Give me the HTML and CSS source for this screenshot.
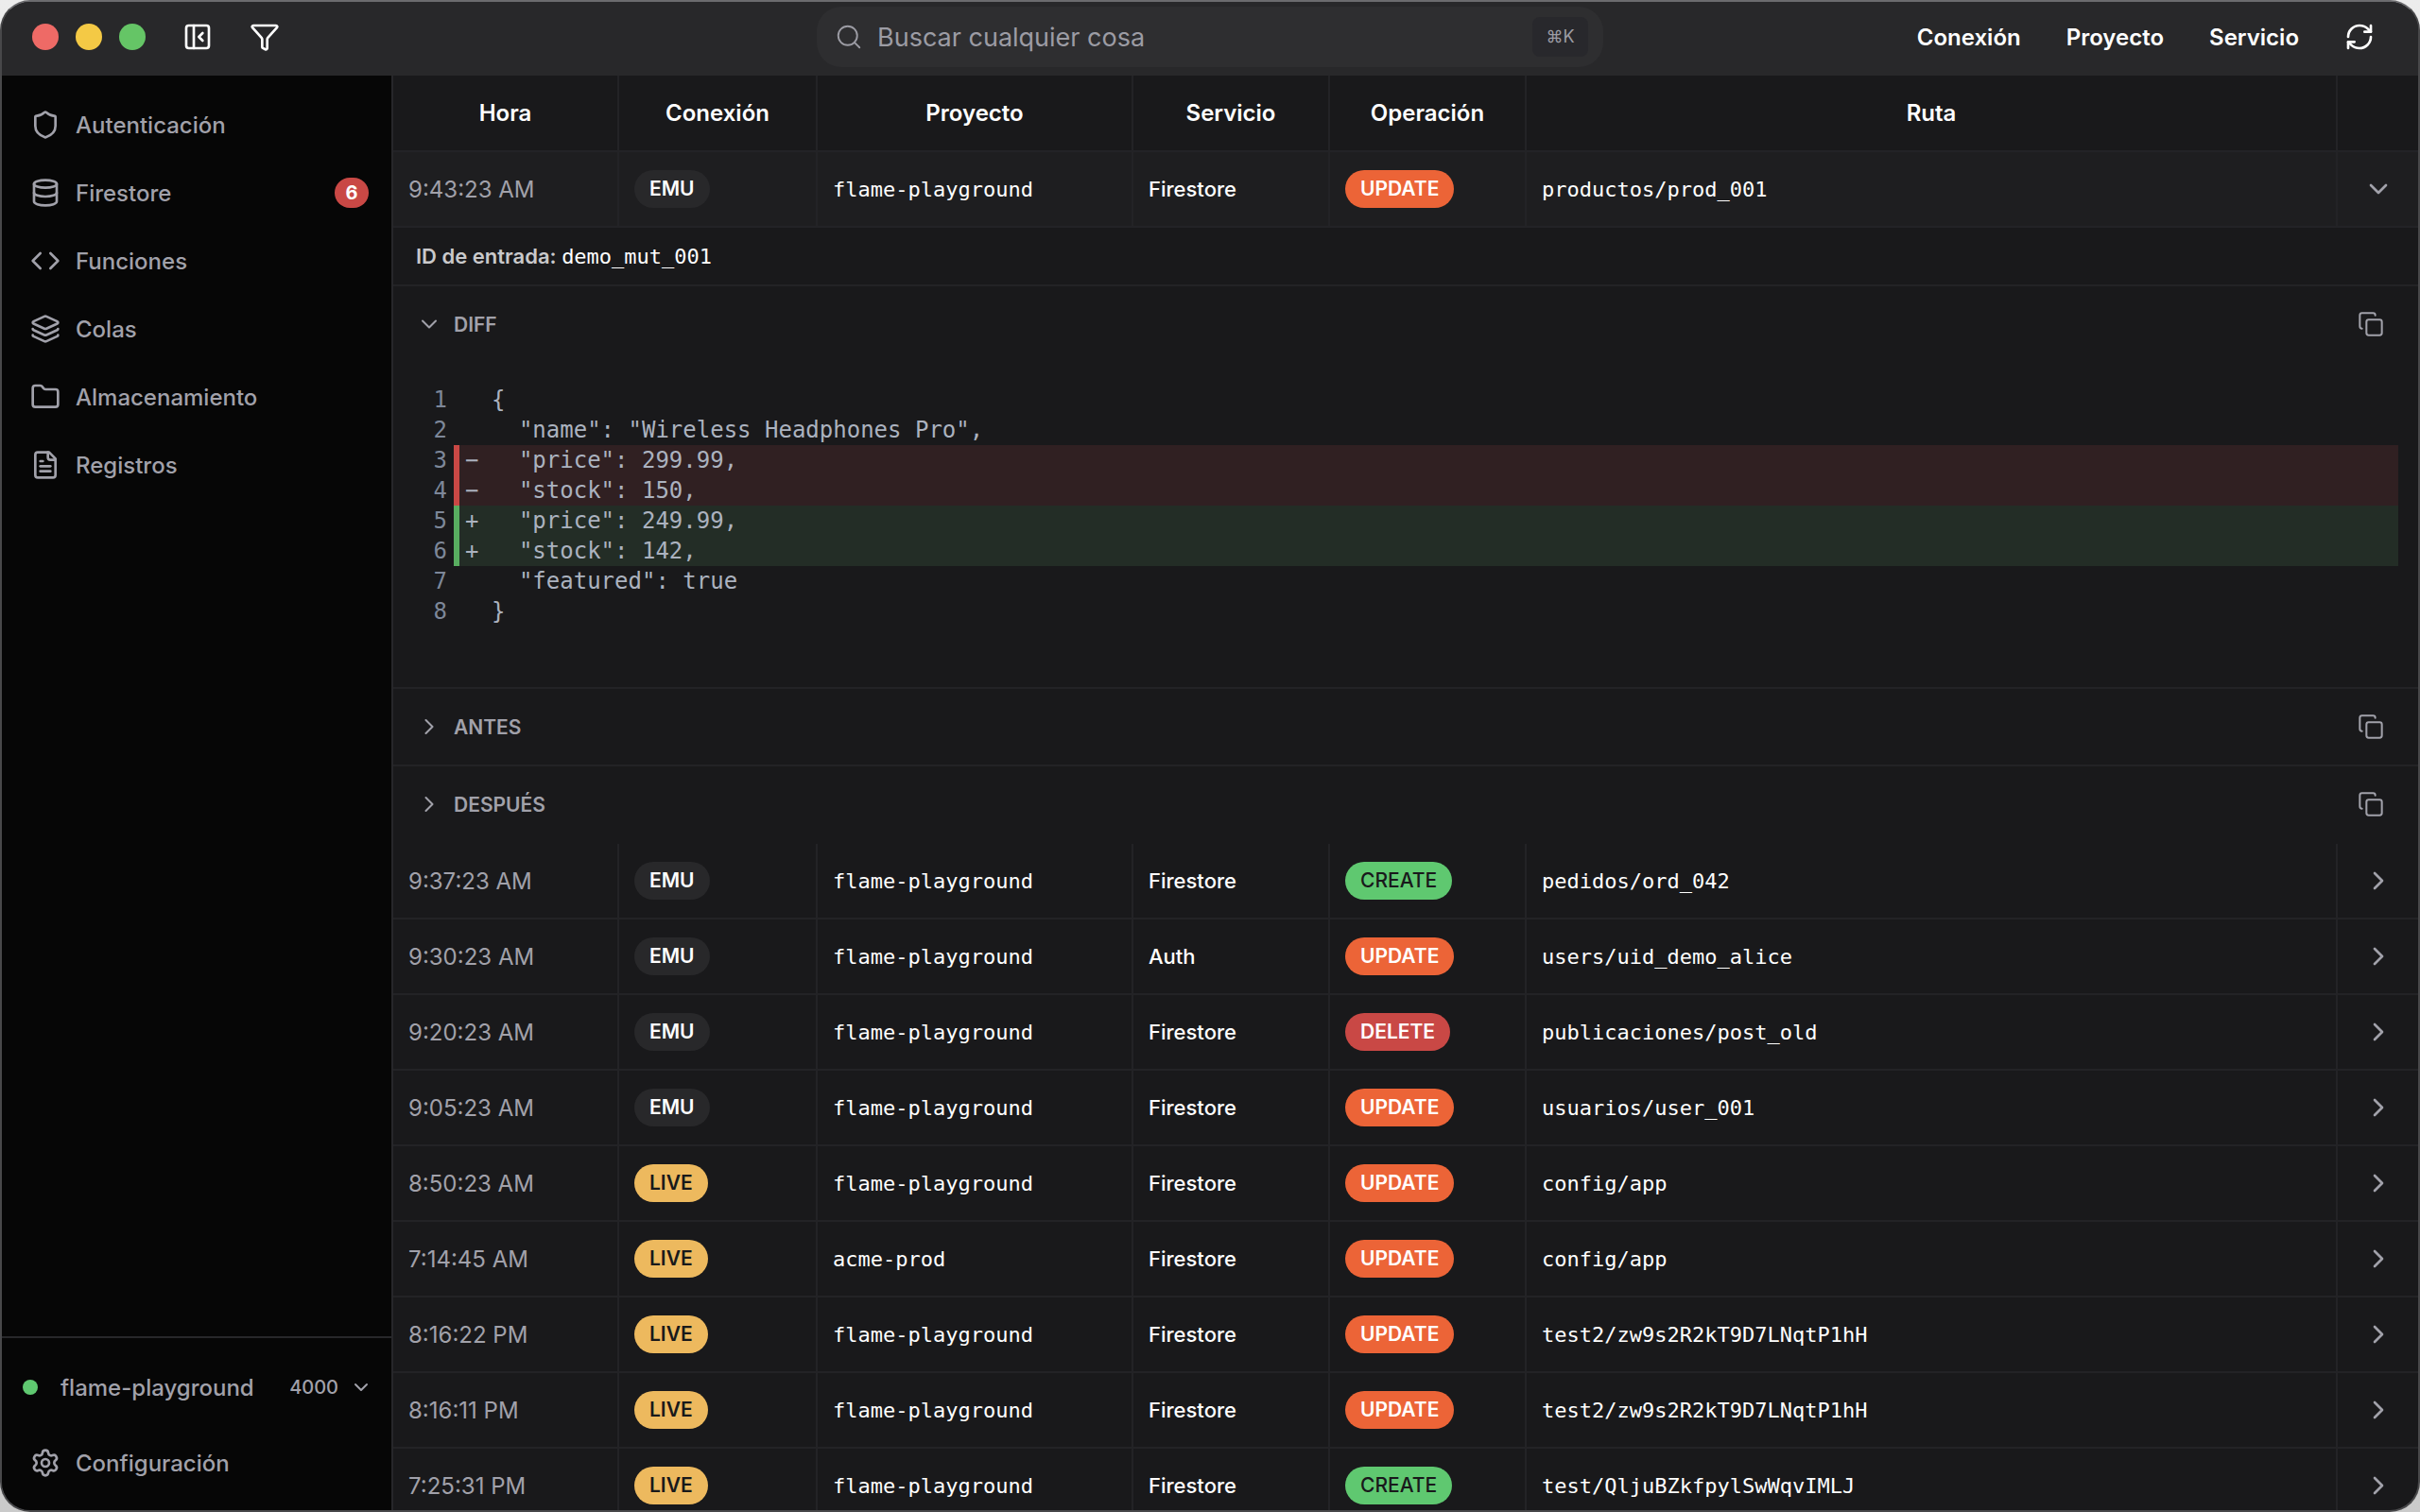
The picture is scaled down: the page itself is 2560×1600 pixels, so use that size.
FILE: index.html
```html
<!DOCTYPE html>
<html lang="es">
<head>
  <meta charset="utf-8">
  <meta name="viewport" content="width=device-width, initial-scale=1.0">
  <title>flame-playground</title>
  <link rel="stylesheet" href="styles.css">
</head>
<body>
  <svg class="sprite" aria-hidden="true">
    <symbol id="i-panel" viewBox="0 0 24 24"><rect x="3" y="3" width="18" height="18" rx="2"/><path d="M9 3v18"/><path d="m16 15-3-3 3-3"/></symbol>
    <symbol id="i-funnel" viewBox="0 0 24 24"><path d="M10 20a1 1 0 0 0 .553.895l2 1A1 1 0 0 0 14 21v-7a2 2 0 0 1 .517-1.341L21.74 4.67A1 1 0 0 0 21 3H3a1 1 0 0 0-.742 1.67l7.225 7.989A2 2 0 0 1 10 14z"/></symbol>
    <symbol id="i-search" viewBox="0 0 24 24"><circle cx="11" cy="11" r="8"/><path d="m21 21-4.34-4.34"/></symbol>
    <symbol id="i-refresh" viewBox="0 0 24 24"><path d="M3 12a9 9 0 0 1 9-9 9.75 9.75 0 0 1 6.74 2.74L21 8"/><path d="M21 3v5h-5"/><path d="M21 12a9 9 0 0 1-9 9 9.75 9.75 0 0 1-6.74-2.74L3 16"/><path d="M8 16H3v5"/></symbol>
    <symbol id="i-shield" viewBox="0 0 24 24"><path d="M20 13c0 5-3.500 7.500-7.660 8.950a1 1 0 0 1-.67-.01C7.500 20.500 4 18 4 13V6a1 1 0 0 1 1-1c2 0 4.500-1.200 6.240-2.720a1.170 1.170 0 0 1 1.520 0C14.510 3.810 17 5 19 5a1 1 0 0 1 1 1z"/></symbol>
    <symbol id="i-database" viewBox="0 0 24 24"><ellipse cx="12" cy="5" rx="9" ry="3"/><path d="M3 5v14a9 3 0 0 0 18 0V5"/><path d="M3 12a9 3 0 0 0 18 0"/></symbol>
    <symbol id="i-code" viewBox="0 0 24 24"><path d="m16 18 6-6-6-6"/><path d="m8 6-6 6 6 6"/></symbol>
    <symbol id="i-layers" viewBox="0 0 24 24"><path d="M12.830 2.180a2 2 0 0 0-1.660 0L2.600 6.080a1 1 0 0 0 0 1.830l8.580 3.910a2 2 0 0 0 1.660 0l8.580-3.900a1 1 0 0 0 0-1.830z"/><path d="M2 12a1 1 0 0 0 .58.91l8.600 3.910a2 2 0 0 0 1.650 0l8.580-3.900A1 1 0 0 0 22 12"/><path d="M2 17a1 1 0 0 0 .58.91l8.600 3.910a2 2 0 0 0 1.650 0l8.580-3.900A1 1 0 0 0 22 17"/></symbol>
    <symbol id="i-folder" viewBox="0 0 24 24"><path d="M20 20a2 2 0 0 0 2-2V8a2 2 0 0 0-2-2h-7.900a2 2 0 0 1-1.690-.9L9.600 3.900A2 2 0 0 0 7.930 3H4a2 2 0 0 0-2 2v13a2 2 0 0 0 2 2Z"/></symbol>
    <symbol id="i-file" viewBox="0 0 24 24"><path d="M15 2H6a2 2 0 0 0-2 2v16a2 2 0 0 0 2 2h12a2 2 0 0 0 2-2V7Z"/><path d="M14 2v4a2 2 0 0 0 2 2h4"/><path d="M10 9H8"/><path d="M16 13H8"/><path d="M16 17H8"/></symbol>
    <symbol id="i-gear" viewBox="0 0 24 24"><path d="M9.671 4.136a2.340 2.340 0 0 1 4.659 0 2.340 2.340 0 0 0 3.319 1.915 2.340 2.340 0 0 1 2.330 4.033 2.340 2.340 0 0 0 0 3.831 2.340 2.340 0 0 1-2.330 4.033 2.340 2.340 0 0 0-3.319 1.915 2.340 2.340 0 0 1-4.659 0 2.340 2.340 0 0 0-3.320-1.915 2.340 2.340 0 0 1-2.330-4.033 2.340 2.340 0 0 0 0-3.831A2.340 2.340 0 0 1 6.350 6.051a2.340 2.340 0 0 0 3.319-1.915"/><circle cx="12" cy="12" r="3"/></symbol>
    <symbol id="i-down" viewBox="0 0 24 24"><path d="m6 9 6 6 6-6"/></symbol>
    <symbol id="i-right" viewBox="0 0 24 24"><path d="m9 18 6-6-6-6"/></symbol>
    <symbol id="i-copy" viewBox="0 0 24 24"><rect x="8" y="8" width="14" height="14" rx="2"/><path d="M4 16c-1.100 0-2-.9-2-2V4c0-1.100.9-2 2-2h10c1.100 0 2 .9 2 2"/></symbol>
  </svg>

  <div class="window">
    <header class="titlebar">
      <div class="titlebar-left">
        <div class="lights"><span class="light red"></span><span class="light yellow"></span><span class="light green"></span></div>
        <button class="icon-btn" aria-label="Ocultar barra lateral"><svg class="icon"><use href="#i-panel"/></svg></button>
        <button class="icon-btn" aria-label="Filtrar"><svg class="icon"><use href="#i-funnel"/></svg></button>
      </div>
      <label class="search">
        <svg class="icon thin"><use href="#i-search"/></svg>
        <input type="text" placeholder="Buscar cualquier cosa" aria-label="Buscar cualquier cosa">
        <kbd>⌘K</kbd>
      </label>
      <div class="titlebar-right">
        <button class="menu-btn">Conexión</button>
        <button class="menu-btn">Proyecto</button>
        <button class="menu-btn">Servicio</button>
        <button class="icon-btn" aria-label="Actualizar"><svg class="icon"><use href="#i-refresh"/></svg></button>
      </div>
    </header>

    <div class="body">
      <aside class="sidebar">
        <nav>
          <a href="#"><svg class="icon"><use href="#i-shield"/></svg>Autenticación</a>
          <a href="#"><svg class="icon"><use href="#i-database"/></svg>Firestore<span class="count">6</span></a>
          <a href="#"><svg class="icon"><use href="#i-code"/></svg>Funciones</a>
          <a href="#"><svg class="icon"><use href="#i-layers"/></svg>Colas</a>
          <a href="#"><svg class="icon"><use href="#i-folder"/></svg>Almacenamiento</a>
          <a href="#"><svg class="icon"><use href="#i-file"/></svg>Registros</a>
        </nav>
        <div class="sidebar-footer">
          <button class="project-btn">
            <span class="dot"></span>
            <span class="project-name">flame-playground</span>
            <span class="port">4000</span>
            <svg class="icon small"><use href="#i-down"/></svg>
          </button>
          <a href="#"><svg class="icon"><use href="#i-gear"/></svg>Configuración</a>
        </div>
      </aside>

      <main>
        <table>
          <colgroup>
            <col class="c-time"><col class="c-conn"><col class="c-proj"><col class="c-serv"><col class="c-op"><col><col class="c-toggle">
          </colgroup>
          <thead>
            <tr>
              <th>Hora</th>
              <th>Conexión</th>
              <th>Proyecto</th>
              <th>Servicio</th>
              <th>Operación</th>
              <th>Ruta</th>
              <th></th>
            </tr>
          </thead>
          <tbody>
            <tr class="open">
              <td class="time">9:43:23 AM</td>
              <td><span class="badge emu">EMU</span></td>
              <td class="mono">flame-playground</td>
              <td>Firestore</td>
              <td><span class="badge update">UPDATE</span></td>
              <td class="mono">productos/prod_001</td>
              <td class="toggle"><button aria-label="Contraer"><svg class="icon"><use href="#i-down"/></svg></button></td>
            </tr>
            <tr class="detail">
              <td colspan="7">
                <div class="entry-id">ID de entrada: <code>demo_mut_001</code></div>
                <section>
                  <div class="section-head">
                    <button class="section-btn"><svg class="icon medium"><use href="#i-down"/></svg>DIFF</button>
                    <button class="copy-btn" aria-label="Copiar"><svg class="icon medium"><use href="#i-copy"/></svg></button>
                  </div>
                  <div class="diff">
                    <div class="line"><span class="num">1</span><span class="code">{</span></div>
                    <div class="line"><span class="num">2</span><span class="code">  "name": "Wireless Headphones Pro",</span></div>
                    <div class="line removed"><span class="num">3</span><span class="code"><span class="mark">−</span>  "price": 299.99,</span></div>
                    <div class="line removed"><span class="num">4</span><span class="code"><span class="mark">−</span>  "stock": 150,</span></div>
                    <div class="line added"><span class="num">5</span><span class="code"><span class="mark">+</span>  "price": 249.99,</span></div>
                    <div class="line added"><span class="num">6</span><span class="code"><span class="mark">+</span>  "stock": 142,</span></div>
                    <div class="line"><span class="num">7</span><span class="code">  "featured": true</span></div>
                    <div class="line"><span class="num">8</span><span class="code">}</span></div>
                  </div>
                </section>
                <section>
                  <div class="section-head">
                    <button class="section-btn"><svg class="icon medium"><use href="#i-right"/></svg>ANTES</button>
                    <button class="copy-btn" aria-label="Copiar"><svg class="icon medium"><use href="#i-copy"/></svg></button>
                  </div>
                </section>
                <section>
                  <div class="section-head">
                    <button class="section-btn"><svg class="icon medium"><use href="#i-right"/></svg>DESPUÉS</button>
                    <button class="copy-btn" aria-label="Copiar"><svg class="icon medium"><use href="#i-copy"/></svg></button>
                  </div>
                </section>
              </td>
            </tr>
            <tr>
              <td class="time">9:37:23 AM</td>
              <td><span class="badge emu">EMU</span></td>
              <td class="mono">flame-playground</td>
              <td>Firestore</td>
              <td><span class="badge create">CREATE</span></td>
              <td class="mono">pedidos/ord_042</td>
              <td class="toggle"><button aria-label="Expandir"><svg class="icon"><use href="#i-right"/></svg></button></td>
            </tr>
            <tr>
              <td class="time">9:30:23 AM</td>
              <td><span class="badge emu">EMU</span></td>
              <td class="mono">flame-playground</td>
              <td>Auth</td>
              <td><span class="badge update">UPDATE</span></td>
              <td class="mono">users/uid_demo_alice</td>
              <td class="toggle"><button aria-label="Expandir"><svg class="icon"><use href="#i-right"/></svg></button></td>
            </tr>
            <tr>
              <td class="time">9:20:23 AM</td>
              <td><span class="badge emu">EMU</span></td>
              <td class="mono">flame-playground</td>
              <td>Firestore</td>
              <td><span class="badge delete">DELETE</span></td>
              <td class="mono">publicaciones/post_old</td>
              <td class="toggle"><button aria-label="Expandir"><svg class="icon"><use href="#i-right"/></svg></button></td>
            </tr>
            <tr>
              <td class="time">9:05:23 AM</td>
              <td><span class="badge emu">EMU</span></td>
              <td class="mono">flame-playground</td>
              <td>Firestore</td>
              <td><span class="badge update">UPDATE</span></td>
              <td class="mono">usuarios/user_001</td>
              <td class="toggle"><button aria-label="Expandir"><svg class="icon"><use href="#i-right"/></svg></button></td>
            </tr>
            <tr>
              <td class="time">8:50:23 AM</td>
              <td><span class="badge live">LIVE</span></td>
              <td class="mono">flame-playground</td>
              <td>Firestore</td>
              <td><span class="badge update">UPDATE</span></td>
              <td class="mono">config/app</td>
              <td class="toggle"><button aria-label="Expandir"><svg class="icon"><use href="#i-right"/></svg></button></td>
            </tr>
            <tr>
              <td class="time">7:14:45 AM</td>
              <td><span class="badge live">LIVE</span></td>
              <td class="mono">acme-prod</td>
              <td>Firestore</td>
              <td><span class="badge update">UPDATE</span></td>
              <td class="mono">config/app</td>
              <td class="toggle"><button aria-label="Expandir"><svg class="icon"><use href="#i-right"/></svg></button></td>
            </tr>
            <tr>
              <td class="time">8:16:22 PM</td>
              <td><span class="badge live">LIVE</span></td>
              <td class="mono">flame-playground</td>
              <td>Firestore</td>
              <td><span class="badge update">UPDATE</span></td>
              <td class="mono">test2/zw9s2R2kT9D7LNqtP1hH</td>
              <td class="toggle"><button aria-label="Expandir"><svg class="icon"><use href="#i-right"/></svg></button></td>
            </tr>
            <tr>
              <td class="time">8:16:11 PM</td>
              <td><span class="badge live">LIVE</span></td>
              <td class="mono">flame-playground</td>
              <td>Firestore</td>
              <td><span class="badge update">UPDATE</span></td>
              <td class="mono">test2/zw9s2R2kT9D7LNqtP1hH</td>
              <td class="toggle"><button aria-label="Expandir"><svg class="icon"><use href="#i-right"/></svg></button></td>
            </tr>
            <tr>
              <td class="time">7:25:31 PM</td>
              <td><span class="badge live">LIVE</span></td>
              <td class="mono">flame-playground</td>
              <td>Firestore</td>
              <td><span class="badge create">CREATE</span></td>
              <td class="mono">test/QljuBZkfpylSwWqvIMLJ</td>
              <td class="toggle"><button aria-label="Expandir"><svg class="icon"><use href="#i-right"/></svg></button></td>
            </tr>
          </tbody>
        </table>
      </main>
    </div>
  </div>
</body>
</html>
```
FILE: styles.css
```css
* {
    box-sizing: border-box;
}
body {
    margin: 0;
    background: linear-gradient(#ececec, #cacaca);
    color: #fff;
    font-family: Inter, "Liberation Sans", sans-serif;
    font-size: 24px;
}
button, input {
    padding: 0;
    border: 0;
    background: none;
    color: inherit;
    font: inherit;
}
a {
    color: inherit;
    text-decoration: none;
}
.sprite {
    display: none;
}
.icon {
    display: block;
    flex: none;
    width: 32px;
    height: 32px;
    fill: none;
    stroke: currentColor;
    stroke-width: 2;
    stroke-linecap: round;
    stroke-linejoin: round;
}
.icon.medium {
    width: 28px;
    height: 28px;
    stroke-width: 1.75;
}
.icon.small {
    width: 24px;
    height: 24px;
}
.icon.thin {
    width: 30px;
    height: 30px;
    stroke-width: 1.5;
}

.window {
    display: flex;
    flex-direction: column;
    height: 100vh;
    overflow: hidden;
    border: 2px solid #48484a;
    border-top-color: #6b6b6e;
    border-radius: 32px;
    background-color: #19191b;
}

/* Title bar */
.titlebar {
    display: grid;
    grid-template-columns: 1fr minmax(0, 832px) 1fr;
    align-items: center;
    flex: none;
    height: 78px;
    padding-bottom: 4px;
    background-color: #28282a;
}
.titlebar-left {
    display: flex;
    align-items: center;
    gap: 39px;
    padding-left: 32px;
}
.lights {
    display: flex;
    gap: 18px;
}
.light {
    width: 28px;
    height: 28px;
    border-radius: 50%;
}
.red { background-color: #ee6a66; }
.yellow { background-color: #f4c945; }
.green { background-color: #65c566; }
.search {
    display: flex;
    align-items: center;
    height: 64px;
    padding: 0 16px 0 19px;
    border-radius: 26px;
    background-color: #2e2e30;
    color: #9c9ca4;
}
.search input {
    flex: 1;
    min-width: 0;
    margin-left: 15px;
    outline: 0;
    font-size: 27px;
}
.search input::placeholder {
    color: #9c9ca4;
    opacity: 1;
}
.search kbd {
    min-width: 59px;
    border-radius: 8px;
    background-color: #28282c;
    font: 18px/42px Inter, "DejaVu Sans", sans-serif;
    text-align: center;
}
.titlebar-right {
    display: flex;
    align-items: center;
    justify-content: flex-end;
    gap: 48px;
    padding-right: 46px;
}
.menu-btn {
    font-weight: 600;
}

.body {
    display: flex;
    flex: 1;
    min-height: 0;
}

/* Sidebar */
.sidebar {
    display: flex;
    flex-direction: column;
    flex: none;
    justify-content: space-between;
    width: 414px;
    border-right: 2px solid #27272a;
    background-color: #060606;
    color: #a1a1aa;
    font-weight: 500;
}
.sidebar nav {
    padding-top: 16px;
}
.sidebar a {
    display: flex;
    align-items: center;
    gap: 16px;
    height: 72px;
    padding: 0 24px 0 30px;
}
.count {
    min-width: 36px;
    margin-left: auto;
    border-radius: 16px;
    background-color: #c94845;
    color: #fff;
    font-size: 20px;
    font-weight: 700;
    line-height: 32px;
    text-align: center;
}
.sidebar-footer {
    padding: 16px 0 14px;
    border-top: 2px solid #27272a;
}
.project-btn {
    display: flex;
    align-items: center;
    width: 100%;
    height: 72px;
    padding: 0 20px 0 22px;
    margin-bottom: 8px;
}
.dot {
    width: 16px;
    height: 16px;
    margin-right: 24px;
    border-radius: 50%;
    background-color: #5fc870;
}
.port {
    margin-left: auto;
    margin-right: 12px;
    font-size: 20px;
}

/* Activity table */
main {
    flex: 1;
    min-width: 0;
    overflow: hidden;
}
table {
    width: 100%;
    table-layout: fixed;
    border-spacing: 0;
    font-size: 22px;
    font-weight: 500;
}
.c-time { width: 239px; }
.c-conn { width: 210px; }
.c-proj { width: 334px; }
.c-serv { width: 208px; }
.c-op { width: 208px; }
.c-toggle { width: 85px; }
th, td {
    height: 80px;
    padding: 0 16px;
    border-right: 2px solid #232326;
    border-bottom: 2px solid #232326;
    text-align: left;
}
th {
    height: 81px;
    font-size: 24px;
    font-weight: 600;
    text-align: center;
}
th:last-child, td:last-child {
    border-right: 0;
}
.open td {
    background-color: #1e1e20;
}
.time {
    color: #a1a1aa;
    font-size: 24px;
    font-weight: 400;
}
.mono, code {
    font-family: "DejaVu Sans Mono", monospace;
    font-size: 22px;
    font-weight: 400;
}
.badge {
    display: inline-block;
    padding: 0 16px;
    border-radius: 20px;
    font-size: 21px;
    font-weight: 600;
    line-height: 40px;
    vertical-align: middle;
}
.emu { background-color: #28282a; }
.live { background-color: #edb95e; color: #19191b; }
.update { background-color: #ec6437; }
.create { background-color: #5fc870; color: #19191b; font-weight: 500; }
.delete { background-color: #c94845; }
.toggle {
    padding: 0;
}
.toggle button {
    display: block;
    margin: 0 auto;
    color: #a1a1aa;
}

/* Expanded entry */
.detail td {
    height: auto;
    padding: 0;
    border: 0;
}
.entry-id {
    height: 62px;
    padding: 0 24px;
    border-bottom: 2px solid #232326;
    color: #c9c9cb;
    font-weight: 600;
    line-height: 60px;
}
.entry-id code {
    color: #fff;
}
section {
    border-bottom: 2px solid #232326;
}
section:last-child {
    border-bottom-color: transparent;
}
.section-head {
    display: flex;
    align-items: center;
    justify-content: space-between;
    height: 80px;
    padding: 0 36px 0 24px;
    color: #a1a1aa;
}
.section-btn {
    display: flex;
    align-items: center;
    gap: 12px;
    font-size: 21px;
    font-weight: 600;
}
.diff {
    padding: 24px 21px 64px 24px;
    color: #abb2bf;
    font: 24px/32px "DejaVu Sans Mono", monospace;
}
.line {
    display: flex;
}
.num {
    width: 40px;
    padding-right: 7px;
    color: #7d8799;
    text-align: right;
}
.code {
    flex: 1;
    padding-left: 40px;
    white-space: pre;
}
.mark {
    display: inline-block;
    width: 28px;
}
.removed .code, .added .code {
    padding-left: 6px;
    border-left: 6px solid;
}
.removed .code {
    border-color: #c94845;
    background-color: #302022;
}
.added .code {
    border-color: #58ad60;
    background-color: #232d26;
}
```
